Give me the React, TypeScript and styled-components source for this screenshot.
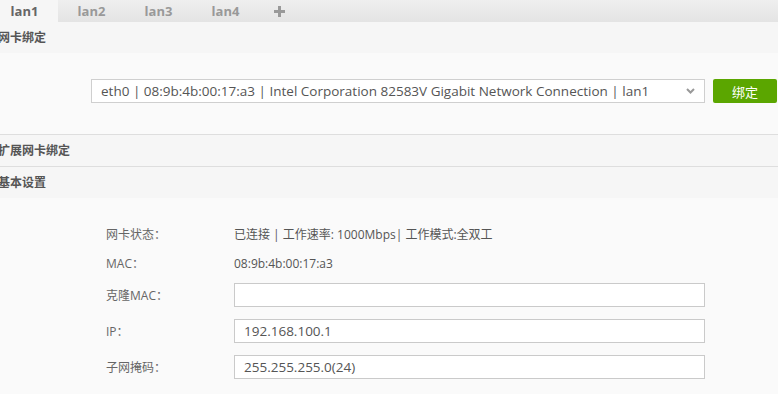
import styled, { createGlobalStyle } from 'styled-components';

const GlobalStyle = createGlobalStyle`
  html, body {
    margin: 0;
    padding: 0;
    background: #fafafa;
    overflow: hidden;
  }
  body {
    font-family: "Open Sans", "Noto Sans CJK SC", sans-serif;
    color: #555;
  }
`;

const Page = styled.div`
  width: 778px;
  height: 394px;
  overflow: hidden;
  background: #fafafa;
`;

const TabBar = styled.div`
  display: flex;
  height: 22px;
  margin-left: -9px;
  background: linear-gradient(#efefef, #e4e4e4);
`;

const Tab = styled.div<{ $active?: boolean }>`
  width: 67px;
  display: flex;
  align-items: center;
  justify-content: center;
  font-size: 13px;
  font-weight: 700;
  line-height: 22px;
  color: ${({ $active }) => ($active ? '#666' : '#999')};
  background: ${({ $active }) => ($active ? '#f6f6f6' : 'transparent')};
`;

const AddTab = styled.div`
  width: 41px;
  display: flex;
  align-items: center;
  justify-content: center;
`;

const Section = styled.section`
  border-bottom: 1px solid #dedede;
`;

const SectionHeader = styled.div`
  height: 31px;
  background: #f6f6f6;
  display: flex;
  align-items: center;
  font-size: 12px;
  font-weight: 700;
  color: #555;

  span {
    margin-left: -2px;
    margin-top: -2px;
  }
`;

const BindBody = styled.div`
  display: flex;
  align-items: center;
  gap: 8px;
  padding: 26px 0 31px 91px;
  background: #fafafa;
`;

const SelectBox = styled.div`
  position: relative;
  width: 614px;
  height: 24px;
  box-sizing: border-box;
  border: 1px solid #cfcfcf;
  background: #fff;
  display: flex;
  align-items: center;
  padding-left: 9px;
  font-size: 13.5px;
  color: #555;
  white-space: nowrap;

  svg {
    position: absolute;
    right: 9px;
    top: 8px;
  }
`;

const BindButton = styled.button`
  width: 64px;
  height: 24px;
  border: none;
  border-radius: 2px;
  background: #5ba600;
  color: #fff;
  font-family: "Noto Sans CJK SC", sans-serif;
  font-size: 13px;
  padding: 0;
`;

const FormBody = styled.div`
  display: grid;
  grid-template-columns: 128px 471px;
  padding: 21px 0 0 106px;
  background: #fafafa;
`;

const Label = styled.div<{ $h: number }>`
  height: ${({ $h }) => $h}px;
  display: flex;
  align-items: center;
  font-size: 12px;
  color: #666;
`;

const Value = styled.div<{ $h: number }>`
  height: ${({ $h }) => $h}px;
  display: flex;
  align-items: center;
  font-size: 12px;
  color: #555;
  white-space: nowrap;
`;

const FieldCell = styled.div`
  height: 36px;
  display: flex;
  align-items: center;
`;

const TextInput = styled.input`
  width: 471px;
  height: 24px;
  box-sizing: border-box;
  border: 1px solid #cacaca;
  background: #fff;
  padding: 0 9px;
  font-family: "Open Sans", "Noto Sans CJK SC", sans-serif;
  font-size: 13.5px;
  color: #555;
  outline: none;
`;

const tabs = ['lan1', 'lan2', 'lan3', 'lan4'];

export default function App() {
  return (
    <Page>
      <GlobalStyle />
      <TabBar>
        {tabs.map((name, i) => (
          <Tab key={name} $active={i === 0}>{name}</Tab>
        ))}
        <AddTab>
          <svg width="11" height="11" viewBox="0 0 11 11">
            <path d="M4 0h3v4h4v3H7v4H4V7H0V4h4z" fill="#999" />
          </svg>
        </AddTab>
      </TabBar>

      <Section>
        <SectionHeader><span>网卡绑定</span></SectionHeader>
        <BindBody>
          <SelectBox>
            eth0 | 08:9b:4b:00:17:a3 | Intel Corporation 82583V Gigabit Network Connection | lan1
            <svg width="9" height="6" viewBox="0 0 9 6">
              <path d="M1 1l3.5 3.5L8 1" stroke="#999" strokeWidth="2" fill="none" />
            </svg>
          </SelectBox>
          <BindButton>绑定</BindButton>
        </BindBody>
      </Section>

      <Section>
        <SectionHeader><span>扩展网卡绑定</span></SectionHeader>
      </Section>

      <div>
        <SectionHeader><span>基本设置</span></SectionHeader>
        <FormBody>
          <Label $h={30}>网卡状态：</Label>
          <Value $h={30}>已连接 | 工作速率: 1000Mbps| 工作模式:全双工</Value>
          <Label $h={28}>MAC：</Label>
          <Value $h={28}>08:9b:4b:00:17:a3</Value>
          <Label $h={36}>克隆MAC：</Label>
          <FieldCell><TextInput defaultValue="" /></FieldCell>
          <Label $h={36}>IP：</Label>
          <FieldCell><TextInput defaultValue="192.168.100.1" /></FieldCell>
          <Label $h={36}>子网掩码：</Label>
          <FieldCell><TextInput defaultValue="255.255.255.0(24)" /></FieldCell>
        </FormBody>
      </div>
    </Page>
  );
}
